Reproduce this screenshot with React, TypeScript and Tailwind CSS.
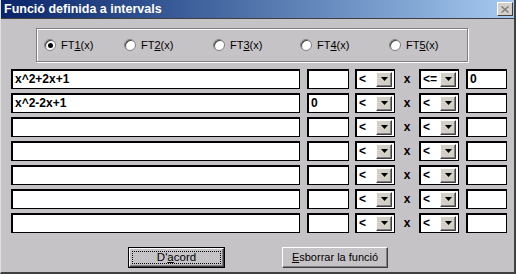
import React from "react";

const font = { fontFamily: '"Liberation Sans", Arial, sans-serif' };

function Edit({ value, w }: { value: string; w: string }) {
  return (
    <div
      className={`${w} h-[20px] bg-white border border-black shadow-[inset_1px_1px_0_#000] flex items-center pl-[3px] text-[12px] font-bold text-black leading-none`}
    >
      {value}
    </div>
  );
}

function Combo({ value }: { value: string }) {
  return (
    <div className="w-[40px] h-[20px] bg-white border border-black shadow-[inset_1px_1px_0_#000] flex items-center justify-between pl-[3px] pr-[2px] text-[12px] font-bold text-black leading-none">
      <span>{value}</span>
      <div className="w-[16px] h-[15px] bg-[#d4d0c8] border-t border-l border-t-white border-l-white border-r border-b border-r-[#404040] border-b-[#404040] shadow-[inset_-1px_-1px_0_#808080] flex items-center justify-center">
        <svg width="7" height="4" viewBox="0 0 7 4">
          <path d="M0 0h7L3.5 4z" fill="#000" />
        </svg>
      </div>
    </div>
  );
}

function Radio({ n, checked }: { n: number; checked?: boolean }) {
  return (
    <div className="flex items-center gap-[5px] text-[11px] text-black">
      <div className="w-[12px] h-[12px] rounded-full bg-white border border-[#808080] shadow-[inset_1px_1px_0_#404040] flex items-center justify-center">
        {checked && <div className="w-[5px] h-[5px] rounded-full bg-black" />}
      </div>
      <span>
        FT<span className="underline">{n}</span>(x)
      </span>
    </div>
  );
}

const rows = [
  { e: "x^2+2x+1", a: "", s1: "<", s2: "<=", b: "0" },
  { e: "x^2-2x+1", a: "0", s1: "<", s2: "<", b: "" },
  { e: "", a: "", s1: "<", s2: "<", b: "" },
  { e: "", a: "", s1: "<", s2: "<", b: "" },
  { e: "", a: "", s1: "<", s2: "<", b: "" },
  { e: "", a: "", s1: "<", s2: "<", b: "" },
  { e: "", a: "", s1: "<", s2: "<", b: "" },
];

export default function App() {
  return (
    <div style={font} className="w-[516px] h-[274px] bg-[#c6c3c6] flex flex-col border-l border-l-[#dfdfdf] border-r-2 border-r-[#404040] border-b-2 border-b-[#404040] overflow-hidden">
      <div className="h-[19px] shrink-0 bg-gradient-to-r from-[#0a246a] to-[#a6caf0] flex items-center justify-between pl-[3px] pr-[1px] border-b border-b-[#404040]">
        <span className="text-white font-bold text-[12.5px] leading-none">Funció definida a intervals</span>
        <div className="w-[16px] h-[14px] bg-[#d4d0c8] border-t border-l border-t-white border-l-white border-r border-b border-r-[#404040] border-b-[#404040] flex items-center justify-center">
          <svg width="8" height="7" viewBox="0 0 8 7">
            <path d="M0.5 0.5L7.5 6.5M7.5 0.5L0.5 6.5" stroke="#808080" strokeWidth="1.5" />
          </svg>
        </div>
      </div>
      <div className="flex flex-col pl-[10px] pt-[9px]">
        <div className="ml-[25px] w-[432px] h-[34px] border border-[#808080] shadow-[1px_1px_0_#fff,inset_1px_1px_0_#fff] flex items-center pl-[7px]">
          <div className="w-[80px]"><Radio n={1} checked /></div>
          <div className="w-[89px]"><Radio n={2} /></div>
          <div className="w-[87px]"><Radio n={3} /></div>
          <div className="w-[89px]"><Radio n={4} /></div>
          <div><Radio n={5} /></div>
        </div>
        <div className="mt-[7px] flex flex-col gap-[4px]">
          {rows.map((r, i) => (
            <div key={i} className="flex items-center">
              <Edit value={r.e} w="w-[289px]" />
              <div className="ml-[7px]"><Edit value={r.a} w="w-[42px]" /></div>
              <div className="ml-[6px]"><Combo value={r.s1} /></div>
              <div className="w-[24px] text-center text-[12px] font-bold text-black">x</div>
              <Combo value={r.s2} />
              <div className="ml-[7px]"><Edit value={r.b} w="w-[41px]" /></div>
            </div>
          ))}
        </div>
        <div className="mt-[14px] flex">
          <div className="ml-[117px] w-[97px] h-[21px] border border-black bg-[#c6c3c6] p-0">
            <div className="w-full h-full border-t border-l border-t-white border-l-white border-r border-b border-r-[#404040] border-b-[#404040] shadow-[inset_-1px_-1px_0_#808080] flex items-center justify-center p-[2px]">
              <div className="w-full h-full border border-dotted border-black flex items-center justify-center text-[11.5px] text-black leading-none">
                D'<span className="underline">a</span>cord
              </div>
            </div>
          </div>
          <div className="ml-[57px] w-[106px] h-[21px] border-t border-l border-t-white border-l-white border-r border-b border-r-[#404040] border-b-[#404040] shadow-[inset_-1px_-1px_0_#808080] flex items-center justify-center text-[11px] text-black leading-none">
            <span><span className="underline">E</span>sborrar la funció</span>
          </div>
        </div>
      </div>
    </div>
  );
}
